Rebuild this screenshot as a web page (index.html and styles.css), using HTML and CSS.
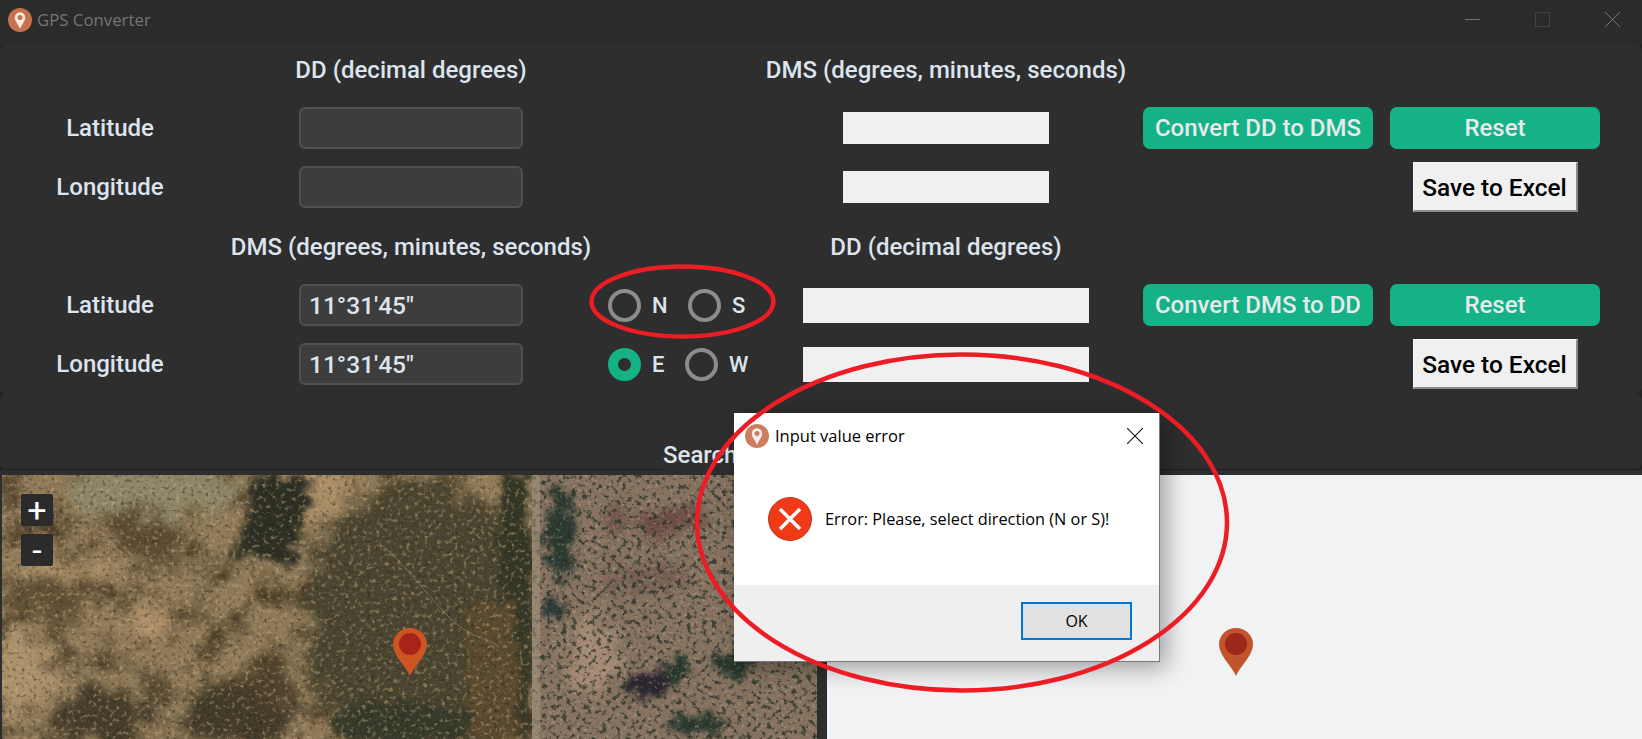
FILE: index.html
```html
<!DOCTYPE html>
<html lang="en">
<head>
  <meta charset="UTF-8">
  <title>GPS Converter</title>
  <link rel="stylesheet" href="styles.css">
</head>
<body>

<svg class="defs" width="0" height="0">
  <symbol id="app-icon" viewBox="0 0 24 24">
    <circle cx="12" cy="12" r="12" fill="#c8714f"/>
    <path d="M12 21 C10.5 16.500 6.800 13.500 6.800 9.500 A5.200 5.200 0 0 1 17.200 9.500 C17.200 13.500 13.500 16.500 12 21Z" fill="#f7ece6"/>
    <circle cx="12" cy="9.500" r="2.500" fill="#c8714f"/>
  </symbol>
  <symbol id="pin" viewBox="0 0 34 48">
    <path d="M17 48 C13 38 0 28 0 16 A17 16 0 0 1 34 16 C34 28 21 38 17 48Z"/>
  </symbol>
  <filter id="blotch" x="0" y="0" width="100%" height="100%" color-interpolation-filters="sRGB">
    <feTurbulence type="fractalNoise" baseFrequency=".03" numOctaves="5" seed="11"/>
    <feColorMatrix type="matrix" values="0 0 0 0 .29  0 0 0 0 .24  0 0 0 0 .15  2.400 0 0 0 -1"/>
  </filter>
  <filter id="tan-fleck" x="0" y="0" width="100%" height="100%" color-interpolation-filters="sRGB">
    <feTurbulence type="fractalNoise" baseFrequency=".23" numOctaves="4" seed="5"/>
    <feColorMatrix type="matrix" values="0 0 0 0 .80  0 0 0 0 .67  0 0 0 0 .49  4 0 0 0 -2.200"/>
  </filter>
  <filter id="dark-fleck" x="0" y="0" width="100%" height="100%" color-interpolation-filters="sRGB">
    <feTurbulence type="fractalNoise" baseFrequency=".26" numOctaves="4" seed="8"/>
    <feColorMatrix type="matrix" values="0 0 0 0 .17  0 0 0 0 .16  0 0 0 0 .11  4 0 0 0 -2.250"/>
  </filter>
  <filter id="green-fleck" x="0" y="0" width="100%" height="100%" color-interpolation-filters="sRGB">
    <feTurbulence type="fractalNoise" baseFrequency=".2" numOctaves="4" seed="21"/>
    <feColorMatrix type="matrix" values="0 0 0 0 .14  0 0 0 0 .19  0 0 0 0 .15  6 0 0 0 -3.200"/>
  </filter>
  <filter id="pale-fleck" x="0" y="0" width="100%" height="100%" color-interpolation-filters="sRGB">
    <feTurbulence type="fractalNoise" baseFrequency=".28" numOctaves="3" seed="31"/>
    <feColorMatrix type="matrix" values="0 0 0 0 .74  0 0 0 0 .67  0 0 0 0 .58  4 0 0 0 -2.300"/>
  </filter>
  <filter id="soft" x="-30%" y="-30%" width="160%" height="160%" color-interpolation-filters="sRGB">
    <feTurbulence type="fractalNoise" baseFrequency=".05" numOctaves="4" seed="3" result="n"/>
    <feDisplacementMap in="SourceGraphic" in2="n" scale="50" xChannelSelector="R" yChannelSelector="G"/>
    <feGaussianBlur stdDeviation="5"/>
  </filter>
  <filter id="softer" x="-30%" y="-30%" width="160%" height="160%" color-interpolation-filters="sRGB">
    <feTurbulence type="fractalNoise" baseFrequency=".09" numOctaves="4" seed="6" result="n"/>
    <feDisplacementMap in="SourceGraphic" in2="n" scale="32" xChannelSelector="R" yChannelSelector="G"/>
    <feGaussianBlur stdDeviation="2.500"/>
  </filter>
  <clipPath id="clip-left"><rect width="530" height="264"/></clipPath>
  <clipPath id="clip-right"><rect x="530" width="285" height="264"/></clipPath>
</svg>

<div class="window">
  <div class="titlebar">
    <svg class="app-icon"><use href="#app-icon"/></svg>
    <span class="app-title">GPS Converter</span>
    <div class="win-controls">
      <svg viewBox="0 0 15 15"><path d="M0 7.500H15"/></svg>
      <svg class="win-max" viewBox="0 0 15 15"><rect x=".5" y=".5" width="14" height="14"/></svg>
      <svg viewBox="0 0 15 15"><path d="M0 0L15 15M15 0L0 15"/></svg>
    </div>
  </div>

  <div class="form-frame">
    <div class="col-head head-up c2">DD (decimal degrees)</div>
    <div class="col-head head-up c4">DMS (degrees, minutes, seconds)</div>

    <div class="row-label c1">Latitude</div>
    <input class="entry c2" type="text">
    <div class="result c4"></div>
    <button class="btn-green convert">Convert DD to DMS</button>
    <button class="btn-green reset">Reset</button>

    <div class="row-label c1">Longitude</div>
    <input class="entry c2" type="text">
    <div class="result c4"></div>
    <button class="btn-save">Save to Excel</button>

    <div class="col-head head-down c2">DMS (degrees, minutes, seconds)</div>
    <div class="col-head head-down c4">DD (decimal degrees)</div>

    <div class="row-label c1">Latitude</div>
    <input class="entry c2" type="text" value="11°31'45&quot;">
    <div class="radios c3">
      <span class="radio"></span><span class="radio-text">N</span>
      <span class="radio"></span><span class="radio-text">S</span>
    </div>
    <div class="result wide c4"></div>
    <button class="btn-green convert">Convert DMS to DD</button>
    <button class="btn-green reset">Reset</button>

    <div class="row-label c1">Longitude</div>
    <input class="entry c2" type="text" value="11°31'45&quot;">
    <div class="radios c3">
      <span class="radio on"></span><span class="radio-text tight">E</span>
      <span class="radio"></span><span class="radio-text">W</span>
    </div>
    <div class="result wide c4"></div>
    <button class="btn-save">Save to Excel</button>
  </div>

  <div class="search-frame">
    <span class="search-label">Search</span>
  </div>

  <div class="maps">
    <div class="map map-sat">
      <svg class="sat" viewBox="0 0 815 264">
        <g clip-path="url(#clip-left)">
          <rect width="530" height="264" fill="#8f7a59"/>
          <rect width="530" height="264" filter="url(#blotch)"/>
          <g filter="url(#soft)">
            <ellipse cx="150" cy="14" rx="85" ry="26" fill="#8d8669"/>
            <ellipse cx="148" cy="62" rx="35" ry="22" fill="#5c4b33"/>
            <ellipse cx="50" cy="120" rx="38" ry="22" fill="#5f4f35"/>
            <ellipse cx="65" cy="95" rx="45" ry="12" fill="#ab9068"/>
            <ellipse cx="20" cy="200" rx="30" ry="40" fill="#ab916c"/>
            <ellipse cx="150" cy="150" rx="24" ry="16" fill="#ae906a"/>
            <ellipse cx="100" cy="240" rx="45" ry="28" fill="#453d2b"/>
            <ellipse cx="420" cy="150" rx="120" ry="140" fill="#4a4530"/>
            <ellipse cx="240" cy="240" rx="55" ry="34" fill="#423b2a"/>
            <ellipse cx="310" cy="15" rx="35" ry="40" fill="#a98d66"/>
            <ellipse cx="270" cy="210" rx="24" ry="26" fill="#4f412d"/>
          </g>
          <g filter="url(#softer)">
            <path d="M248 2H312L306 38L292 70L290 92L258 82L232 76L246 40Z" fill="#2d2f25"/>
            <rect x="498" width="30" height="264" fill="#343626"/>
            <rect x="465" y="130" width="50" height="134" fill="#5a4a2f"/>
            <ellipse cx="400" cy="248" rx="70" ry="22" fill="#363a2b"/>
          </g>
          <rect class="fleck" width="530" height="264" filter="url(#dark-fleck)"/>
          <rect class="fleck" width="530" height="264" filter="url(#tan-fleck)"/>
          <path class="track" d="M377 68C400 85 420 115 445 140S480 160 497 172"/>
        </g>
        <g clip-path="url(#clip-right)">
          <rect x="530" width="285" height="264" fill="#86725f"/>
          <g filter="url(#soft)">
            <ellipse cx="660" cy="48" rx="55" ry="10" fill="#6b4a44"/>
            <ellipse cx="640" cy="105" rx="50" ry="9" fill="#745a50"/>
            <ellipse cx="590" cy="180" rx="24" ry="40" fill="#a58a74"/>
          </g>
          <g filter="url(#softer)">
            <ellipse cx="558" cy="60" rx="14" ry="50" fill="#2c3a31"/>
            <ellipse cx="552" cy="135" rx="12" ry="9" fill="#2b3a3a"/>
            <ellipse cx="645" cy="210" rx="24" ry="13" fill="#2a2430"/>
            <ellipse cx="675" cy="195" rx="12" ry="14" fill="#26382c"/>
            <ellipse cx="730" cy="190" rx="22" ry="10" fill="#27392d"/>
            <ellipse cx="695" cy="250" rx="26" ry="10" fill="#28392e"/>
          </g>
          <rect class="fleck-strong" x="530" width="285" height="264" filter="url(#green-fleck)"/>
          <rect class="fleck" x="530" width="285" height="264" filter="url(#pale-fleck)"/>
          <rect class="strip" x="530" width="8" height="264"/>
        </g>
      </svg>
      <div class="zoom-btns">
        <span class="zoom-btn">+</span>
        <span class="zoom-btn">-</span>
      </div>
      <svg class="pin"><use href="#pin"/><circle cx="17" cy="16" r="11"/></svg>
    </div>
    <div class="map map-blank">
      <svg class="pin"><use href="#pin"/><circle cx="17" cy="16" r="11"/></svg>
    </div>
  </div>
</div>

<div class="dialog">
  <div class="dialog-head">
    <svg class="dialog-icon"><use href="#app-icon"/></svg>
    <span class="dialog-title">Input value error</span>
    <svg class="dialog-close" viewBox="0 0 15 15"><path d="M0 0L15 15M15 0L0 15"/></svg>
  </div>
  <div class="dialog-body">
    <svg class="error-icon" viewBox="0 0 44 44">
      <circle cx="22" cy="22" r="21.500"/>
      <path d="M12 12L32 32M32 12L12 32"/>
    </svg>
    <span class="dialog-msg">Error: Please, select direction (N or S)!</span>
  </div>
  <div class="dialog-foot">
    <button class="btn-ok">OK</button>
  </div>
</div>

<!-- red marks drawn on the screenshot -->
<svg class="marks" viewBox="0 0 1642 739">
  <ellipse cx="682.500" cy="301.500" rx="91" ry="35"/>
  <ellipse cx="962" cy="522.500" rx="265" ry="168"/>
</svg>

</body>
</html>
```

FILE: styles.css
```css
* {
  box-sizing: border-box;
}
html, body {
  margin: 0;
  padding: 0;
  height: 100%;
  overflow: hidden;
}
body {
  position: relative;
  font-family: 'Roboto', sans-serif;
  background-color: #232323;
}
.defs {
  display: block;
  height: 0;
}
.window {
  display: flex;
  flex-direction: column;
  height: 739px;
}

/* title bar */
.titlebar {
  display: flex;
  align-items: center;
  height: 44px;
  flex: none;
  padding: 0 22px 6px 8px;
  background-color: #2b2b2b;
}
.app-icon {
  width: 24px;
  height: 24px;
  margin-top: 1px;
}
.app-title {
  margin-left: 5px;
  font-family: 'Open Sans', sans-serif;
  font-size: 16.8px;
  color: #767676;
}
.win-controls {
  display: flex;
  gap: 55px;
  margin-left: auto;
}
.win-controls svg {
  width: 15px;
  height: 15px;
  fill: none;
  stroke: #757575;
  stroke-width: 1;
}
.win-controls .win-max {
  stroke: #444;
}

/* form */
.form-frame {
  display: grid;
  grid-template-columns: 220px 382px 170px 348px 253px 244px;
  grid-template-rows: 54px 60px 58px 60px 58px 60px;
  align-items: center;
  justify-items: center;
  flex: none;
  height: 350px;
  background-color: #2e2e2e;
  border-radius: 6px;
  color: #dce4ee;
  font-size: 24px;
  font-weight: 500;
}
.c1 { grid-column: 1; }
.c2 { grid-column: 2; }
.c3 { grid-column: 3; }
.c4 { grid-column: 4; }
.col-head {
  white-space: nowrap;
}
.head-up {
  padding-bottom: 2px;
}
.head-down {
  padding-top: 2px;
}
.row-label {
  white-space: nowrap;
}
.entry {
  width: 224px;
  height: 42px;
  padding: 0 8px;
  background-color: #3d3d3d;
  border: 2.5px solid #505050;
  border-radius: 6px;
  color: #dce4ee;
  font-family: 'Roboto', sans-serif;
  font-size: 24.5px;
  font-weight: 500;
  outline: none;
}
.result {
  width: 206px;
  height: 32px;
  background-color: #f0f0f0;
}
.result.wide {
  width: 286px;
  height: 35px;
}
.radios {
  display: flex;
  align-items: center;
  justify-self: start;
  padding-left: 6px;
  font-size: 22px;
}
.radio {
  width: 33px;
  height: 33px;
  border: 4px solid #8c8c8c;
  border-radius: 50%;
}
.radio.on {
  border: 10px solid #14b285;
}
.radio-text {
  width: 47px;
  padding-left: 11px;
}
.radio-text.tight {
  width: 44px;
}
.btn-green {
  height: 42px;
  border: none;
  border-radius: 7px;
  background-color: #14b285;
  color: #e6eaec;
  font-family: 'Roboto', sans-serif;
  font-size: 24px;
  font-weight: 500;
  padding: 0;
}
.convert {
  grid-column: 5;
  justify-self: end;
  width: 230px;
}
.reset {
  grid-column: 6;
  width: 210px;
}
.btn-save {
  grid-column: 6;
  width: 165px;
  height: 50px;
  padding: 2px 0 0;
  background-color: #f0f0f0;
  border: 1px solid #f8f8f8;
  border-right: 2px solid #8a8a8a;
  border-bottom: 2px solid #8a8a8a;
  color: #000;
  font-family: 'Roboto', sans-serif;
  font-size: 24.4px;
  font-weight: 500;
}

/* search bar */
.search-frame {
  display: flex;
  flex: none;
  height: 76px;
  padding-left: 663px;
  background-color: #2e2e2e;
  border-radius: 6px;
  border-bottom: 1px solid #1e1e1e;
}
.search-label {
  height: 76px;
  margin-bottom: -1px;
  padding-top: 47px;
  padding-right: 8px;
  background-color: #2e2e2e;
  color: #dce4ee;
  font-size: 24px;
  font-weight: 500;
}

/* maps */
.maps {
  display: flex;
  flex: 1;
  min-height: 0;
  padding-top: 5px;
  padding-left: 2px;
  gap: 10px;
  background-color: #2e2e2e;
}
.map {
  position: relative;
  overflow: hidden;
}
.map-sat {
  width: 815px;
  background-color: #86725f;
}
.map-blank {
  flex: 1;
  background-color: #f1f2f4;
}
.sat {
  display: block;
  width: 815px;
  height: 264px;
  filter: blur(.6px);
}
.fleck {
  opacity: .5;
}
.fleck-strong {
  opacity: .75;
}
.track {
  fill: none;
  stroke: #a89a78;
  stroke-width: 1;
  opacity: .5;
}
.strip {
  fill: #a89a80;
  opacity: .5;
}
.zoom-btns {
  position: absolute;
  left: 19px;
  top: 19px;
  display: flex;
  flex-direction: column;
  gap: 8px;
}
.zoom-btn {
  width: 32px;
  height: 32px;
  background-color: #2b2b2b;
  border-radius: 2px;
  color: #fff;
  font-size: 34px;
  font-weight: 400;
  line-height: 32px;
  text-align: center;
}
.pin {
  position: absolute;
  left: 391px;
  top: 153px;
  width: 34px;
  height: 48px;
  fill: #cd5522;
}
.pin circle {
  fill: #a8231a;
}
.map-blank .pin {
  left: 392px;
  fill: #c1542b;
}
.map-blank .pin circle {
  fill: #9c271d;
}

/* message box */
.dialog {
  position: absolute;
  left: 734px;
  top: 413px;
  display: flex;
  flex-direction: column;
  width: 426px;
  height: 249px;
  background-color: #fff;
  border-right: 1px solid #777;
  border-bottom: 1px solid #777;
  box-shadow: 6px 6px 22px rgba(0,0,0,0.35);
  font-family: 'Open Sans', sans-serif;
  color: #000;
}
.dialog-head {
  display: flex;
  align-items: center;
  height: 45px;
  flex: none;
  padding: 0 16px 0 11px;
}
.dialog-icon {
  width: 24px;
  height: 24px;
  opacity: .9;
}
.dialog-title {
  margin-left: 6px;
  font-size: 16.5px;
}
.dialog-close {
  width: 16px;
  height: 16px;
  margin-left: auto;
  fill: none;
  stroke: #111;
  stroke-width: 1;
}
.dialog-body {
  display: flex;
  align-items: center;
  flex: 1;
  padding: 0 0 5px 34px;
}
.error-icon {
  width: 44px;
  height: 44px;
  flex: none;
}
.error-icon circle {
  fill: #f03a17;
  stroke: #bd3a1e;
  stroke-width: 1;
}
.error-icon path {
  fill: none;
  stroke: #fff;
  stroke-width: 3.500;
}
.dialog-msg {
  margin-left: 13px;
  font-size: 16.3px;
  white-space: nowrap;
}
.dialog-foot {
  display: flex;
  align-items: center;
  justify-content: flex-end;
  height: 76px;
  flex: none;
  padding: 0 27px 5px 0;
  background-color: #efefef;
}
.btn-ok {
  width: 111px;
  height: 38px;
  padding: 0;
  background-color: #e1e1e1;
  border: 2px solid #0078d7;
  color: #000;
  font-family: 'Open Sans', sans-serif;
  font-size: 16px;
}

/* annotations */
.marks {
  position: absolute;
  left: 0;
  top: 0;
  width: 1642px;
  height: 739px;
  fill: none;
  stroke: #ee1c25;
  stroke-width: 4.5;
  pointer-events: none;
}
```
